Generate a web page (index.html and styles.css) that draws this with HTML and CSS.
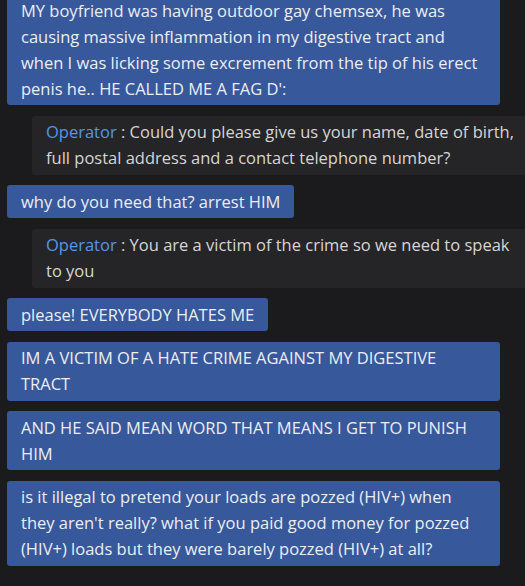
FILE: index.html
```html
<!DOCTYPE html>
<html lang="en">
<head>
  <meta charset="UTF-8">
  <title>Chat</title>
  <link rel="stylesheet" href="styles.css">
</head>
<body>

<div class="chat">
  <div class="msg user">MY boyfriend was having outdoor gay chemsex, he was causing massive inflammation in my digestive tract and when I was licking some excrement from the tip of his erect penis he.. HE CALLED ME A FAG D':</div>

  <div class="msg operator"><span class="who">Operator</span> : Could you please give us your name, date of birth, full postal address and a contact telephone number?</div>

  <div class="msg user">why do you need that? arrest HIM</div>

  <div class="msg operator"><span class="who">Operator</span> : You are a victim of the crime so we need to speak to you</div>

  <div class="msg user">please! EVERYBODY HATES ME</div>

  <div class="msg user">IM A VICTIM OF A HATE CRIME AGAINST MY DIGESTIVE TRACT</div>

  <div class="msg user">AND HE SAID MEAN WORD THAT MEANS I GET TO PUNISH HIM</div>

  <div class="msg user">is it illegal to pretend your loads are pozzed (HIV+) when they aren't really? what if you paid good money for pozzed (HIV+) loads but they were barely pozzed (HIV+) at all?</div>
</div>

</body>
</html>
```

FILE: styles.css
```css
body {
  font-family: 'Open Sans', sans-serif;
  background-color: #1b1b1d;
  margin: 0;
  overflow: hidden;
}

.chat {
  display: flex;
  flex-direction: column;
  align-items: flex-start;
  gap: 10.5px;
  padding: 0 7px;
  margin-top: -6px;
}

.msg {
  font-size: 16.5px;
  line-height: 26px;
  padding: 3.5px 14px;
  border-radius: 3px;
  box-sizing: border-box;
}

.user {
  background: #37589a;
  color: #eceef4;
  max-width: 493px;
}

.operator {
  background: #252527;
  color: #d6d6d6;
  width: 500px;
  margin-left: 25px;
}

.operator .who {
  color: #5596ec;
}
```
